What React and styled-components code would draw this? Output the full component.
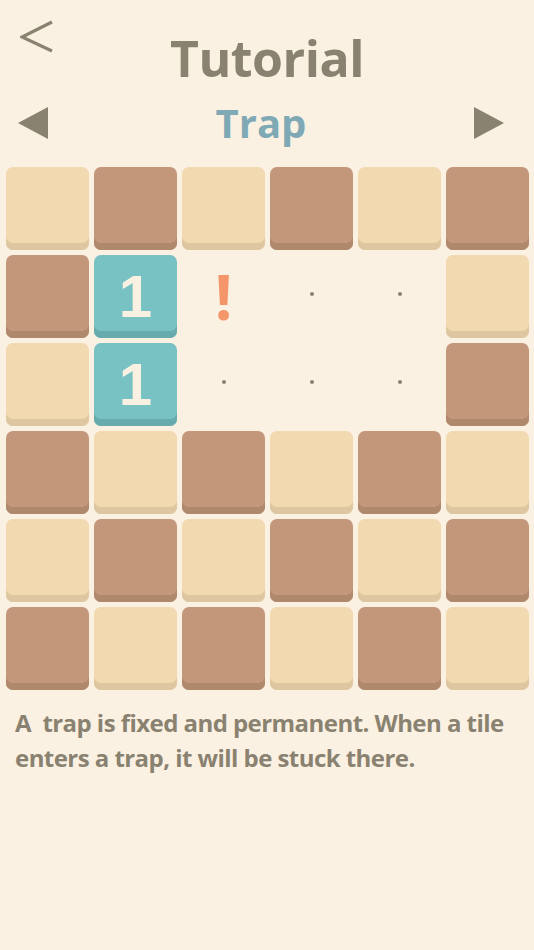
import React from 'react'
import styled, { createGlobalStyle } from 'styled-components'

const INK = '#8a8270'
const BG = '#fbf1e3'

const GlobalStyle = createGlobalStyle`
  html, body {
    margin: 0;
    padding: 0;
    background: ${BG};
  }
  body {
    font-family: 'Open Sans', 'Noto Sans', sans-serif;
    color: ${INK};
  }
`

const Page = styled.div`
  width: 534px;
  min-height: 950px;
  display: flex;
  flex-direction: column;
`

const Header = styled.header`
  display: grid;
  grid-template-columns: 1fr auto 1fr;
  align-items: start;
  padding: 20px 0 0;
`

const BackButton = styled.button`
  justify-self: start;
  margin-left: 20px;
  width: 34px;
  height: 34px;
  padding: 0;
  border: none;
  background: none;
  cursor: pointer;
`

const Title = styled.h1`
  margin: 9px 0 0;
  font-size: 50px;
  font-weight: 700;
  line-height: 58px;
  color: ${INK};
  letter-spacing: -0.5px;
`

const LevelBar = styled.nav`
  display: flex;
  align-items: center;
  justify-content: space-between;
  padding: 0 30px 0 18px;
  margin-top: 10px;
  height: 52px;
`

const Arrow = styled.button`
  width: 30px;
  height: 32px;
  padding: 0;
  border: none;
  background: none;
  cursor: pointer;
`

const LevelName = styled.h2`
  margin: 0;
  font-size: 40px;
  font-weight: 700;
  color: #7fa9b5;
  line-height: 52px;
`

const Board = styled.div`
  display: grid;
  grid-template-columns: repeat(6, 83px);
  grid-auto-rows: 83px;
  gap: 5px;
  padding: 0 6px;
  margin-top: 18px;
`

const palette = {
  light: ['#f2d9b0', '#dec6a0'],
  dark: ['#c2977a', '#b0896c'],
  teal: ['#79c2c3', '#68abad'],
}

const Tile = styled.div`
  border-radius: 7px;
  background: ${({ kind }) => palette[kind][0]};
  box-shadow: inset 0 -7px 0 ${({ kind }) => palette[kind][1]};
  display: flex;
  align-items: center;
  justify-content: center;
  padding-bottom: 6px;
  box-sizing: border-box;
`

const Number = styled.span`
  font-family: 'Liberation Sans', Arial, sans-serif;
  font-weight: 700;
  font-size: 60px;
  color: ${BG};
  line-height: 1;
  margin-top: 6px;
`

const Cell = styled.div`
  display: flex;
  align-items: center;
  justify-content: center;
  padding-bottom: 6px;
  box-sizing: border-box;
`

const Dot = styled.span`
  width: 4px;
  height: 4px;
  border-radius: 50%;
  background: ${INK};
`

const Trap = styled.span`
  font-size: 62px;
  font-weight: 700;
  color: #f4956a;
  line-height: 1;
  margin-top: 4px;
`

const Caption = styled.p`
  margin: 15px 15px 0;
  font-size: 24px;
  font-weight: 700;
  line-height: 35px;
  color: ${INK};
  letter-spacing: -0.55px;
  white-space: pre-wrap;
`

// L = light, D = dark, T = teal "1", ! = trap, . = empty
const LAYOUT = [
  'LDLDLD',
  'DT!..L',
  'LT...D',
  'DLDLDL',
  'LDLDLD',
  'DLDLDL',
]

const renderCell = (c, key) => {
  if (c === 'L') return <Tile key={key} kind="light" />
  if (c === 'D') return <Tile key={key} kind="dark" />
  if (c === 'T')
    return (
      <Tile key={key} kind="teal">
        <Number>1</Number>
      </Tile>
    )
  if (c === '!')
    return (
      <Cell key={key}>
        <Trap>!</Trap>
      </Cell>
    )
  return (
    <Cell key={key}>
      <Dot />
    </Cell>
  )
}

export default function App() {
  return (
    <Page>
      <GlobalStyle />
      <Header>
        <BackButton aria-label="Back">
          <svg width="34" height="34" viewBox="0 0 34 34">
            <polyline
              points="32,2 2,17 32,31"
              fill="none"
              stroke={INK}
              strokeWidth="3.2"
            />
          </svg>
        </BackButton>
        <Title>Tutorial</Title>
        <span />
      </Header>
      <LevelBar>
        <Arrow aria-label="Previous">
          <svg width="30" height="32" viewBox="0 0 30 32">
            <polygon points="30,0 0,16 30,32" fill={INK} />
          </svg>
        </Arrow>
        <LevelName>Trap</LevelName>
        <Arrow aria-label="Next">
          <svg width="30" height="32" viewBox="0 0 30 32">
            <polygon points="0,0 30,16 0,32" fill={INK} />
          </svg>
        </Arrow>
      </LevelBar>
      <Board>
        {LAYOUT.flatMap((row, r) =>
          row.split('').map((c, i) => renderCell(c, `${r}-${i}`))
        )}
      </Board>
      <Caption>
        {'A  trap is fixed and permanent. When a tile enters a trap, it will be stuck there.'}
      </Caption>
    </Page>
  )
}
